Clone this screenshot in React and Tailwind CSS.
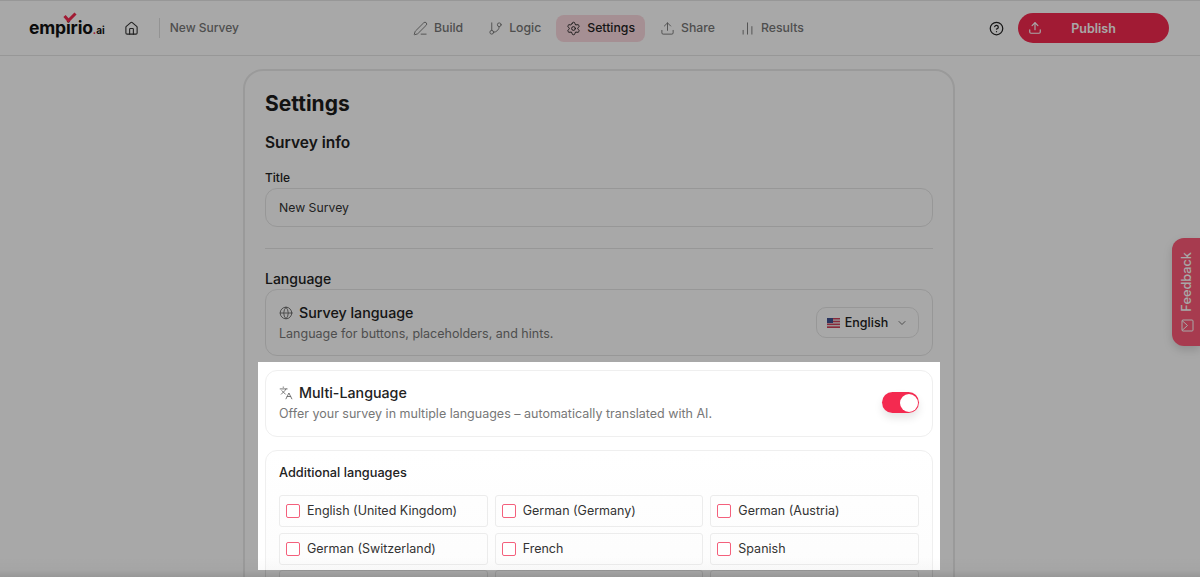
import React from "react";
import {
  House,
  PenLine,
  GitBranch,
  Settings,
  Upload,
  ChartNoAxesColumn,
  CircleHelp,
  Globe,
  Languages,
  ChevronDown,
} from "lucide-react";

const navItems = [
  { label: "Build", Icon: PenLine },
  { label: "Logic", Icon: GitBranch },
  { label: "Settings", Icon: Settings, active: true },
  { label: "Share", Icon: Upload },
  { label: "Results", Icon: ChartNoAxesColumn },
];

const languages = [
  "English (United Kingdom)",
  "German (Germany)",
  "German (Austria)",
  "German (Switzerland)",
  "French",
  "Spanish",
];

function UsFlag() {
  return (
    <svg width="13" height="10" viewBox="0 0 13 10">
      <rect width="13" height="10" rx="1" fill="#e8dfe0" />
      <rect width="13" height="1.4" fill="#d0405a" />
      <rect y="2.8" width="13" height="1.4" fill="#d0405a" />
      <rect y="5.6" width="13" height="1.4" fill="#d0405a" />
      <rect y="8.4" width="13" height="1.6" fill="#d0405a" />
      <rect width="6" height="5" fill="#3f4f8f" />
    </svg>
  );
}

function Logo() {
  return (
    <div className="relative flex items-baseline font-bold text-[#111] leading-none">
      <svg className="absolute left-[34px] top-[-7px]" width="14" height="11" viewBox="0 0 14 11">
        <path d="M1.5 4 L5.5 8.5 L12.5 1.5" fill="none" stroke="#f42a50" strokeWidth="3" />
      </svg>
      <span className="text-[17.5px] tracking-[-0.15px]">empirio</span>
      <span className="text-[10px] text-[#f42a50]">.</span>
      <span className="text-[10px]">ai</span>
    </div>
  );
}

function Header() {
  return (
    <header className="h-[56px] shrink-0 flex items-center bg-white border-t border-b border-[#e6e6e6]">
      <div className="w-[403px] flex items-center pl-[29px]">
        <Logo />
        <House size={15} strokeWidth={1.75} className="ml-[19px] text-[#333]" />
        <div className="w-px h-[20px] bg-[#e0e0e0] ml-[20px]"></div>
        <span className="ml-[10px] text-[12px] font-medium text-[#777]">New Survey</span>
      </div>
      <nav className="flex items-center gap-[5px]">
        {navItems.map(({ label, Icon, active }) => (
          <div
            key={label}
            className={
              active
                ? "h-[27px] px-[10px] flex items-center gap-[6px] rounded-lg bg-[#fbd9df] text-[#222]"
                : "h-[27px] px-[10px] flex items-center gap-[6px] rounded-lg text-[#777]"
            }
          >
            <Icon size={15} strokeWidth={1.5} />
            <span className="text-[12.25px] font-medium">{label}</span>
          </div>
        ))}
      </nav>
      <div className="flex-1 flex items-center justify-end pr-[31px]">
        <CircleHelp size={15} className="text-[#222]" />
        <button className="ml-[14px] w-[151px] h-[30px] rounded-full bg-[#f42a50] text-white flex items-center relative">
          <Upload size={14} className="absolute left-[10px]" />
          <span className="w-full pt-[2px] text-center text-[12.5px] font-semibold">Publish</span>
        </button>
      </div>
    </header>
  );
}

export default function App() {
  return (
    <div className="relative h-[577px] overflow-hidden bg-white font-['Inter',sans-serif]">
      <Header />

      <main className="w-[712px] ml-[243px] mt-[13px] rounded-[20px] border-2 border-[#eaeaea] px-[20px] pt-[19px] pb-[20px]">
        <h1 className="text-[21px] leading-[28px] font-bold text-[#1c1c1c]">Settings</h1>
        <h2 className="mt-[14px] text-[15.5px] leading-[22px] font-semibold text-[#222]">Survey info</h2>

        <label className="block mt-[15px] text-[12px] leading-[18px] font-medium text-[#222]">Title</label>
        <div className="mt-[1px] h-[39px] rounded-xl border border-[#e6e6e6] flex items-center px-[13px] pt-[2px] text-[12.25px] text-[#333]">
          New Survey
        </div>

        <div className="mt-[21px] border-t border-[#e6e6e6]"></div>

        <h3 className="mt-[20px] text-[14px] leading-[20px] font-medium text-[#222]">Language</h3>
        <div className="h-[67px] rounded-xl border border-[#e6e6e6] flex items-center justify-between px-[13px]">
          <div>
            <div className="flex items-center gap-[6px]">
              <Globe size={14} strokeWidth={1.5} className="text-[#666]" />
              <span className="text-[14.25px] leading-[20px] font-medium text-[#222]">Survey language</span>
            </div>
            <p className="mt-[1px] text-[12.5px] leading-[19px] text-[#777]">Language for buttons, placeholders, and hints.</p>
          </div>
          <div className="h-[31px] w-[103px] rounded-[10px] border border-[#e6e6e6] flex items-center justify-center gap-[5px] pt-[1px]">
            <UsFlag />
            <span className="text-[12.5px] font-medium text-[#222]">English</span>
            <ChevronDown size={12} className="ml-[3px] text-[#777]" />
          </div>
        </div>

        {/* spotlight of the product tour, the shadow dims the rest of the page */}
        <div className="relative z-10 mt-[6px] -mx-[7px] px-[7px] pt-[8px] h-[208px] overflow-hidden bg-white shadow-[0_0_0_2000px_rgba(0,0,0,0.34)]">
          <div className="h-[67px] rounded-xl border border-[#efefef] flex items-center justify-between px-[13px]">
            <div className="mb-[2px]">
              <div className="flex items-center gap-[6px]">
                <Languages size={14} strokeWidth={1.5} className="text-[#666]" />
                <span className="text-[14.25px] leading-[20px] font-medium text-[#222]">Multi-Language</span>
              </div>
              <p className="mt-[1px] text-[12.5px] leading-[19px] text-[#777]">
                Offer your survey in multiple languages – automatically translated with AI.
              </p>
            </div>
            <div className="mb-[2px] w-[37px] h-[21px] rounded-full bg-[#f42a50] flex items-center justify-end pr-[1.5px] shadow-[0_5px_8px_rgba(0,0,0,0.1)]">
              <div className="w-[18px] h-[18px] rounded-full bg-white"></div>
            </div>
          </div>

          <div className="mt-[13px] h-[200px] rounded-t-xl border border-[#efefef] bg-gradient-to-b from-white to-[#fbfbfb] px-[13px] pt-[14px]">
            <h4 className="text-[12.75px] leading-[16px] font-medium text-[#222]">Additional languages</h4>
            <div className="mt-[14px] grid grid-cols-3 gap-[6px_7px]">
              {languages.map((name) => (
                <div key={name} className="h-[32px] rounded-[3px] border border-[#ececec] flex items-center px-[6px] gap-[7px]">
                  <div className="w-[14px] h-[14px] rounded-[2px] border-[1.5px] border-[#f4607c] bg-white"></div>
                  <span className="text-[12.5px] text-[#333]">{name}</span>
                </div>
              ))}
            </div>
          </div>
        </div>

        {/* the list goes on below the spotlight, only the next row's top edge shows */}
        <div className="border-x border-[#e6e6e6] px-[13px] grid grid-cols-3 gap-[7px]">
          <div className="h-[32px] rounded-[3px] border border-[#e6e6e6]"></div>
          <div className="h-[32px] rounded-[3px] border border-[#e6e6e6]"></div>
          <div className="h-[32px] rounded-[3px] border border-[#e6e6e6]"></div>
        </div>
      </main>

      <div className="absolute right-0 top-[238px] w-[28px] h-[108px] rounded-l-xl bg-[#fe5a78] text-white flex flex-col items-center justify-end pl-[2px] pb-[14px] gap-[7px] shadow-[0_4px_10px_rgba(0,0,0,0.15)]">
        <span className="[writing-mode:vertical-rl] rotate-180 text-[12.75px] font-medium">Feedback</span>
        <svg width="13" height="13" viewBox="0 0 13 13" fill="none" stroke="currentColor" strokeWidth="1">
          <rect x="1" y="1" width="11" height="11" rx="1" />
          <path d="M1 1.5 L6.5 6.5 L1 11.5" />
        </svg>
      </div>

      <div className="absolute inset-x-0 bottom-0 z-20 h-[20px] bg-gradient-to-b from-transparent via-black/[2%] via-[65%] to-black/10"></div>
    </div>
  );
}
